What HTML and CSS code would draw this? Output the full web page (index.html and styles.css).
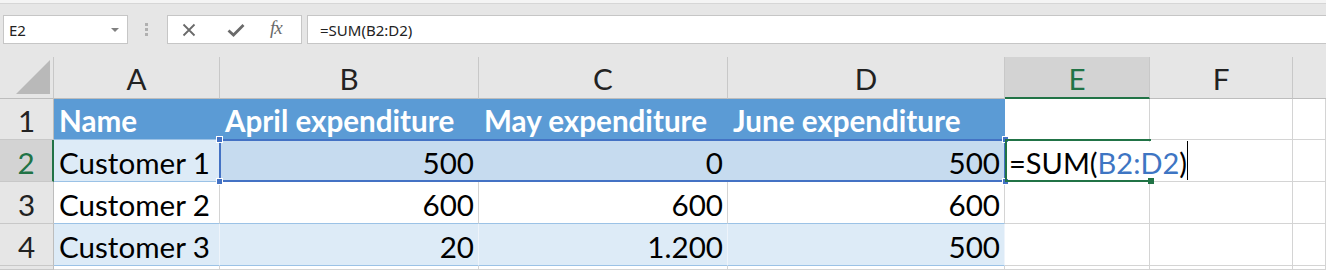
FILE: index.html
```html
<!DOCTYPE html>
<html>
<head>
<meta charset="utf-8">
<link rel="stylesheet" href="styles.css">
</head>
<body>
<div class="topstrip"></div>
<div class="fbar">
  <div class="namebox"><span>E2</span><span class="caret"></span></div>
  <div class="dots"><i></i><i></i><i></i></div>
  <div class="btnbox">
    <svg class="ic" width="14" height="14" viewBox="0 0 14 14"><path d="M1.5 1.5 L12.5 12.5 M12.5 1.5 L1.5 12.5" stroke="#6a6a6a" stroke-width="1.8" fill="none"/></svg>
    <svg class="ic" width="18" height="14" viewBox="0 0 18 14"><path d="M1.5 7.5 L6.5 12 L16.5 2" stroke="#6a6a6a" stroke-width="2.8" fill="none"/></svg>
    <span class="fx">fx</span>
  </div>
  <div class="formula">=SUM(B2:D2)</div>
</div>
<div class="gapbar"></div>
<div class="sheet">
  <div class="ch corner"><span class="tri"></span></div>
  <div class="ch">A</div>
  <div class="ch">B</div>
  <div class="ch">C</div>
  <div class="ch">D</div>
  <div class="ch active">E</div>
  <div class="ch">F</div>
  <div class="ch last"></div>

  <div class="rh">1</div>
  <div class="c hd">Name</div>
  <div class="c hd">April expenditure</div>
  <div class="c hd">May expenditure</div>
  <div class="c hd">June expenditure</div>
  <div class="c"></div>
  <div class="c"></div>
  <div class="c"></div>

  <div class="rh active">2</div>
  <div class="c band">Customer 1</div>
  <div class="c sel num">500</div>
  <div class="c sel num">0</div>
  <div class="c sel num">500</div>
  <div class="c edit"><span class="edtext">=SUM(<span class="ref">B2:D2</span>)<span class="cur"></span></span></div>
  <div class="c"></div>
  <div class="c"></div>

  <div class="rh">3</div>
  <div class="c plain">Customer 2</div>
  <div class="c plain num">600</div>
  <div class="c plain num">600</div>
  <div class="c plain num">600</div>
  <div class="c"></div>
  <div class="c"></div>
  <div class="c"></div>

  <div class="rh">4</div>
  <div class="c band">Customer 3</div>
  <div class="c band num">20</div>
  <div class="c band num">1.200</div>
  <div class="c band num">500</div>
  <div class="c"></div>
  <div class="c"></div>
  <div class="c"></div>

  <div class="rh"></div>
  <div class="c"></div><div class="c"></div><div class="c"></div><div class="c"></div><div class="c"></div><div class="c"></div><div class="c"></div>

  <div class="selbox"><i class="h tl"></i><i class="h bl"></i><i class="h tr"></i><i class="h br"></i></div>
  <div class="editbox"><i class="gh"></i></div>
</div>
</body>
</html>
```
FILE: styles.css
```css
* { box-sizing: border-box; }
html, body { margin: 0; padding: 0; }
body {
  width: 1326px;
  height: 270px;
  overflow: hidden;
  background: #e6e6e6;
  font-family: "Lato", "Liberation Sans", sans-serif;
}
.topstrip {
  height: 4px;
  background: #f4f4f4;
  border-bottom: 1px solid #d6d6d6;
}
.fbar {
  display: flex;
  align-items: stretch;
  height: 29px;
  margin-top: 11px;
  padding-left: 3px;
  font-family: "Noto Sans", "Open Sans", sans-serif;
  font-size: 15px;
  color: #222;
}
.namebox {
  width: 125px;
  background: #fff;
  border: 1px solid #c6c6c6;
  display: flex;
  align-items: center;
  justify-content: space-between;
  padding: 1px 8px 0 5px;
}
.caret {
  width: 0; height: 0;
  border-left: 4px solid transparent;
  border-right: 4px solid transparent;
  border-top: 4px solid #808080;
}
.dots {
  width: 39px;
  display: flex;
  flex-direction: column;
  align-items: center;
  justify-content: center;
  gap: 2px;
  padding-right: 2px;
}
.dots i {
  display: block;
  width: 3px; height: 3px;
  background: #b0b0b0;
}
.btnbox {
  width: 135px;
  background: #fff;
  border: 1px solid #c6c6c6;
  display: flex;
  align-items: center;
  padding-left: 14px;
}
.btnbox .ic:nth-child(1) { margin-right: 31px; }
.btnbox .ic:nth-child(2) { margin-right: 25px; }
.fx {
  font-family: "Liberation Serif", serif;
  font-style: italic;
  font-size: 19px;
  color: #6a6a6a;
  margin-top: -3px;
  letter-spacing: -1px;
}
.formula {
  flex: 1;
  margin-left: 5px;
  background: #fff;
  border: 1px solid #c6c6c6;
  border-right: none;
  display: flex;
  align-items: center;
  padding: 1px 0 0 12px;
}
.gapbar { height: 13px; }

.sheet {
  position: relative;
  display: grid;
  grid-template-columns: 54px 166px 259px 249px 277px 145px 143px 33px;
  grid-template-rows: 42px 41px 42px 42px 42px 3px;
  font-size: 29.6px;
  color: #000;
}
.ch {
  background: #e6e6e6;
  border-right: 1px solid #c8c8c8;
  border-bottom: 1px solid #bdbdbd;
  display: flex;
  align-items: center;
  justify-content: center;
  color: #222;
  padding-top: 2px;
}
.ch.last { border-right: none; }
.ch.active {
  background: #d3d3d3;
  color: #217346;
  border-bottom: 2px solid #217346;
}
.corner { position: relative; }
.tri {
  position: absolute;
  right: 3px; bottom: 4px;
  width: 0; height: 0;
  border-left: 34px solid transparent;
  border-bottom: 34px solid #b9b9b9;
}
.rh {
  background: #e6e6e6;
  border-right: 1px solid #bdbdbd;
  border-bottom: 1px solid #c8c8c8;
  display: flex;
  align-items: center;
  justify-content: center;
  color: #222;
  padding-top: 3px;
}
.rh.active {
  background: #d3d3d3;
  color: #217346;
  border-right: 2px solid #217346;
}
.c {
  background: #fff;
  border-right: 1px solid #d4d4d4;
  border-bottom: 1px solid #d4d4d4;
  display: flex;
  align-items: center;
  padding: 3px 4px 0 5px;
  white-space: nowrap;
}
.c.hd {
  background: #5b9bd5;
  color: #fff;
  font-weight: 700;
  border-right: 1px solid #5b9bd5;
  border-bottom: 1px solid #9bc2e6;
}
.c.band {
  background: #ddebf7;
  border-bottom-color: #9bc2e6;
  border-right-color: #eef4fb;
}
.c.plain {
  border-bottom-color: #9bc2e6;
}
.c.sel {
  background: #c6dbef;
  border-right-color: #c6dbef;
}
.c.num { justify-content: flex-end; }
.c.edit {
  position: relative;
  z-index: 2;
  overflow: visible;
  padding: 0 0 0 4px;
  font-size: 29px;
}
.edtext {
  background: #fff;
  display: inline-flex;
  align-items: center;
  height: 38px;
  padding-top: 3px;
  position: relative;
}
.ref { color: #3e75c3; }
.cur {
  display: inline-block;
  width: 1px;
  height: 39px;
  background: #000;
  margin-left: 0;
  margin-top: -3px;
}
.selbox {
  position: absolute;
  left: 219px;
  top: 82px;
  width: 787px;
  height: 43px;
  border: 2px solid #4472c4;
  z-index: 3;
  pointer-events: none;
}
.h {
  position: absolute;
  width: 7px; height: 7px;
  background: #4472c4;
  border: 1px solid #fff;
}
.h.tl { left: -5px; top: -5px; }
.h.bl { left: -5px; bottom: -5px; }
.h.tr { right: -5px; top: -5px; }
.h.br { right: -5px; bottom: -5px; }
.editbox {
  position: absolute;
  left: 1005px;
  top: 82px;
  width: 146px;
  height: 43px;
  border-top: 2px solid #217346;
  border-bottom: 2px solid #217346;
  border-left: 2px solid #217346;
  z-index: 4;
  pointer-events: none;
}
.gh {
  position: absolute;
  right: -3px; bottom: -4px;
  width: 6px; height: 6px;
  background: #217346;
}
```
